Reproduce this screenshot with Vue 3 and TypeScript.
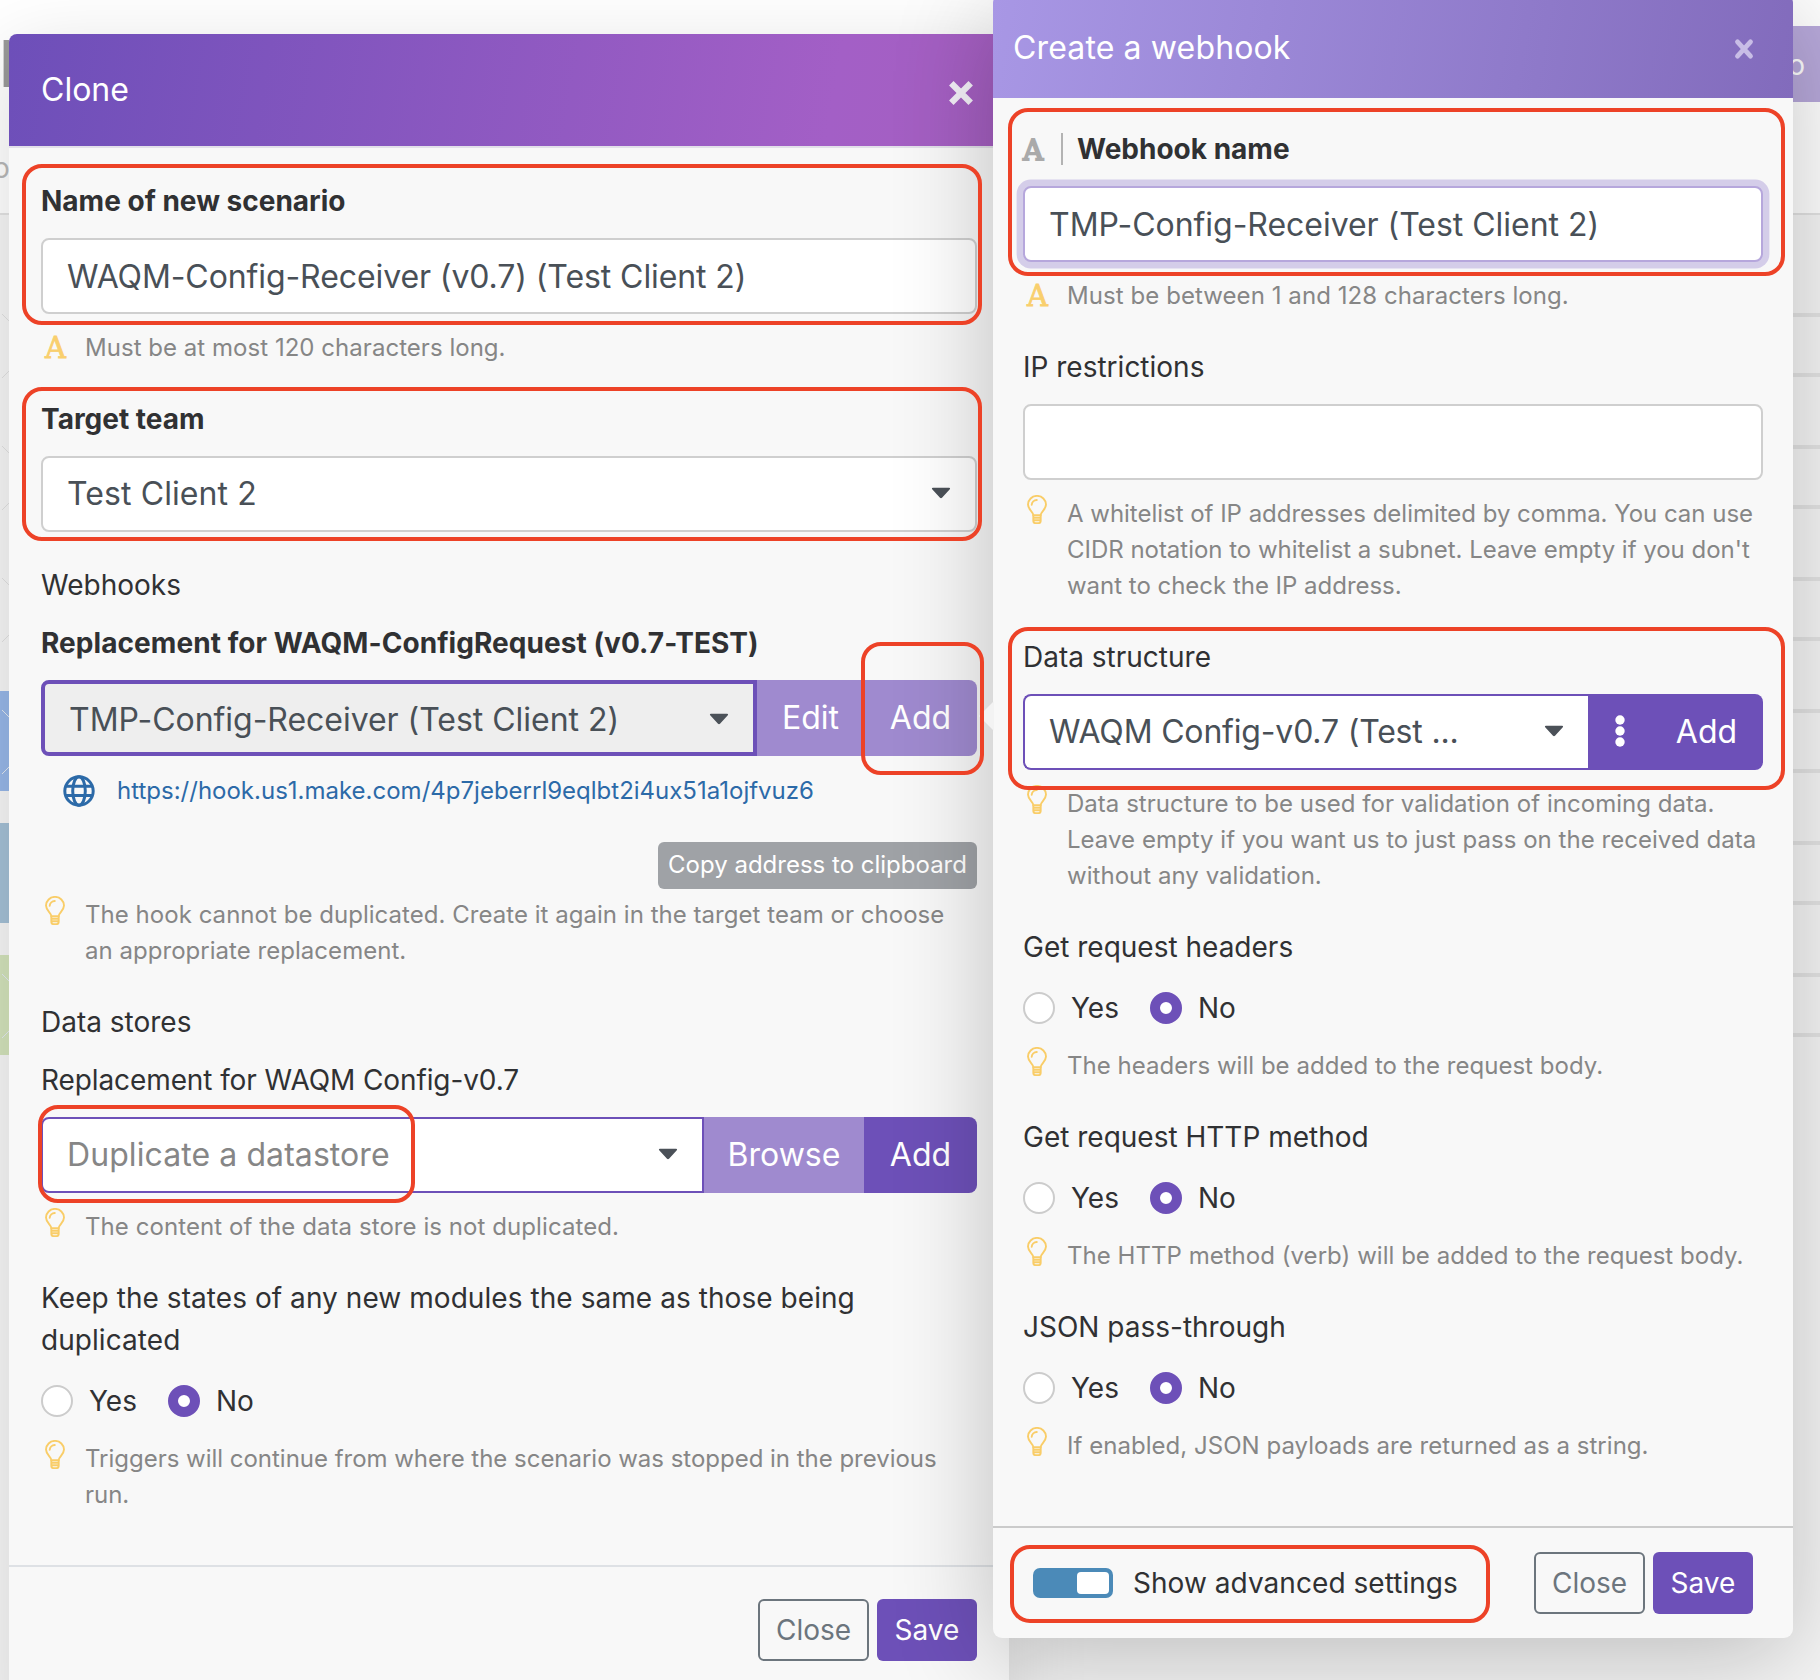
<script setup lang="ts">
import { h, type FunctionalComponent } from 'vue'

/** Light bulb shown in front of a hint. */
const Bulb: FunctionalComponent = () =>
  h('svg', { viewBox: '0 0 20 29', width: 20, height: 29, fill: 'none', stroke: '#f9cd68', 'stroke-width': 1.9, 'stroke-linejoin': 'round', 'stroke-linecap': 'round' }, [
    h('path', { d: 'M6.3 20.2C6.3 16.6 1 14.6 1 9.6a9 8.7 0 0 1 18 0c0 5-5.300 7-5.300 10.600z' }),
    h('path', { d: 'M4.700 9.800A5.300 5.200 0 0 1 9.800 5' }),
    h('path', { d: 'M6.300 20.200v5.300c0 1.500 1 2.600 2.200 2.600h3c1.200 0 2.200-1.100 2.200-2.600v-5.300M6.500 22.800h7M6.500 25.300h7' }),
  ])

/** Small downward arrow of a select box. */
const Caret: FunctionalComponent = () =>
  h('svg', { viewBox: '0 0 20 12', width: 20, height: 12 }, [
    h('path', { d: 'M1.800.8h16.400c.8 0 1.200.9.600 1.500l-7.800 8.500c-.6.6-1.400.6-2 0L1.200 2.300C.6 1.700 1 .8 1.800.8z', fill: '#4b5158' }),
  ])

interface YesNoField { label: string; hint: string }
const yesNoFields: YesNoField[] = [
  { label: 'Get request headers', hint: 'The headers will be added to the request body.' },
  { label: 'Get request HTTP method', hint: 'The HTTP method (verb) will be added to the request body.' },
  { label: 'JSON pass-through', hint: 'If enabled, JSON payloads are returned as a string.' },
]

interface Box { x: number; y: number; w: number; h: number }
const highlights: Box[] = [
  { x: 22, y: 164, w: 960, h: 161 },
  { x: 22, y: 387, w: 960, h: 154 },
  { x: 861, y: 642, w: 123, h: 133 },
  { x: 38, y: 1105, w: 377, h: 98 },
  { x: 1008, y: 108, w: 777, h: 168 },
  { x: 1008, y: 627, w: 777, h: 163 },
  { x: 1010, y: 1545, w: 480, h: 78 },
]
const place = (b: Box) => ({ left: b.x + 'px', top: b.y + 'px', width: b.w + 'px', height: b.h + 'px' })

const rowLines = [313, 373, 445, 505, 577, 637, 709, 769, 841, 901, 973, 1033]
const modules = [
  { y: 691, color: '#97b7e8', cross: true },
  { y: 823, color: '#a4c0d6', cross: false },
  { y: 955, color: '#d3e3bb', cross: true },
]
const chevrons = [314, 446, 578]
</script>

<template>
  <div class="screen">
    <div class="page">
      <span class="page-title">H</span>
      <span class="page-tab">o</span>
      <div class="page-rule"></div>
      <div class="page-body"></div>
      <div class="page-button">o</div>
      <i v-for="y in rowLines" :key="y" class="row-line" :style="{ top: y - 0.5 + 'px' }"></i>
      <svg v-for="y in chevrons" :key="y" class="chevron" :style="{ top: y + 'px' }" width="9" height="64" viewBox="0 0 9 64"><path d="M2 0l7 7M2 64l7-7" stroke="#e0e0e0" fill="none" /></svg>
      <div v-for="m in modules" :key="m.y" class="module" :style="{ top: m.y + 'px', background: m.color }">
        <svg v-if="m.cross" width="9" height="64" viewBox="0 0 9 64"><path d="M2 0l7 7M2 64l7-7" stroke="#e3e9f0" fill="none" /></svg>
      </div>
    </div>

    <section class="modal clone">
      <header>
        <h2>Clone</h2>
        <svg width="26" height="26" viewBox="0 0 26 26"><path d="M3.300 3.300l19.400 19.400M22.700 3.300L3.300 22.700" stroke="#f4f0f8" stroke-width="6.300" /></svg>
      </header>
      <div class="body">
        <label class="strong">Name of new scenario</label>
        <div class="input long">WAQM-Config-Receiver (v0.7) (Test Client 2)</div>
        <p class="hint"><b class="serif">A</b><span>Must be at most 120 characters long.</span></p>

        <label class="strong next">Target team</label>
        <div class="input select"><span>Test Client 2</span><Caret /></div>

        <label class="section">Webhooks</label>
        <label class="strong sub spread">Replacement for WAQM-ConfigRequest (v0.7-TEST)</label>
        <div class="group">
          <div class="input thick"><span>TMP-Config-Receiver (Test Client 2)</span><Caret /></div>
          <button class="light edit">Edit</button>
          <button class="light add">Add</button>
        </div>
        <div class="url">
          <svg width="32" height="32" viewBox="0 0 32 32" fill="none" stroke="#2c6aa8" stroke-width="3"><circle cx="16" cy="16" r="14.200" /><ellipse cx="16" cy="16" rx="6.300" ry="14.200" /><path d="M3 11.200h26M3 20.500h26" /></svg>
          <a>https://hook.us1.make.com/4p7jeberrl9eqlbt2i4ux51a1ojfvuz6</a>
        </div>
        <div class="copy-row"><button class="copy">Copy address to clipboard</button></div>
        <p class="hint tight"><Bulb /><span>The hook cannot be duplicated. Create it again in the target team or choose<br>an appropriate replacement.</span></p>

        <label class="next">Data stores</label>
        <label class="sub squeezed">Replacement for WAQM Config-v0.7</label>
        <div class="group">
          <div class="input joined"><span class="muted">Duplicate a datastore</span><Caret /></div>
          <button class="light browse">Browse</button>
          <button class="dark add">Add</button>
        </div>
        <p class="hint wide"><Bulb /><span>The content of the data store is not duplicated.</span></p>

        <label class="next spread">Keep the states of any new modules the same as those being<br>duplicated</label>
        <div class="radios"><i></i><span>Yes</span><i class="on"></i><span>No</span></div>
        <p class="hint after-radio"><Bulb /><span class="even">Triggers will continue from where the scenario was stopped in the previous<br>run.</span></p>
      </div>
      <footer><button class="outline">Close</button><button class="save">Save</button></footer>
    </section>

    <section class="modal webhook">
      <header>
        <h2>Create a webhook</h2>
        <svg width="20" height="22" viewBox="0 0 20 22"><path d="M3.500 3.800l13 14.400M16.500 3.800l-13 14.400" stroke="#c8bde6" stroke-width="4.800" stroke-linecap="round" /></svg>
      </header>
      <div class="body">
        <label class="strong typed"><b class="serif grey">A</b><i></i><span>Webhook name</span></label>
        <div class="input focus">TMP-Config-Receiver (Test Client 2)</div>
        <p class="hint wide"><b class="serif">A</b><span>Must be between 1 and 128 characters long.</span></p>

        <label class="next">IP restrictions</label>
        <div class="input"></div>
        <p class="hint"><Bulb /><span class="even">A whitelist of IP addresses delimited by comma. You can use<br>CIDR notation to whitelist a subnet. Leave empty if you don't<br>want to check the IP address.</span></p>

        <label class="next">Data structure</label>
        <div class="group">
          <div class="input joined"><span class="narrow">WAQM Config-v0.7 (Test ...</span><Caret /></div>
          <button class="dark dots"><svg width="10" height="32" viewBox="0 0 10 32" fill="#fff"><circle cx="5" cy="5" r="4.700" /><circle cx="5" cy="16" r="4.700" /><circle cx="5" cy="27" r="4.700" /></svg></button>
          <button class="dark add">Add</button>
        </div>
        <p class="hint"><Bulb /><span>Data structure to be used for validation of incoming data.<br>Leave empty if you want us to just pass on the received data<br>without any validation.</span></p>

        <template v-for="f in yesNoFields" :key="f.label">
          <label class="next">{{ f.label }}</label>
          <div class="radios"><i></i><span>Yes</span><i class="on"></i><span>No</span></div>
          <p class="hint after-radio"><Bulb /><span>{{ f.hint }}</span></p>
        </template>
      </div>
      <footer>
        <div class="toggle"><i></i></div><span>Show advanced settings</span>
        <button class="outline">Close</button><button class="save">Save</button>
      </footer>
      <svg class="pointer" width="15" height="30" viewBox="0 0 15 30"><path d="M15 0L0 15l15 15z" fill="#f3f3f3" /></svg>
    </section>

    <div v-for="(b, n) in highlights" :key="n" class="highlight" :style="place(b)"></div>
  </div>
</template>

<style>
body { margin: 0; }
</style>

<style scoped>
* { box-sizing: border-box; }
.screen { position: relative; width: 1820px; height: 1680px; overflow: hidden; background: #fff; font-family: Inter, "Liberation Sans", sans-serif; color: #303133; letter-spacing: 0; }
h2, p, label { margin: 0; font-weight: 400; }
button { font: inherit; border: 0; padding: 0; margin: 0; letter-spacing: inherit; }

.page { position: absolute; inset: 0; }
.page > * { position: absolute; }
.page-title { left: -2px; top: 26px; font-size: 64px; line-height: 76px; color: #999; }
.page-tab { left: -7px; top: 151px; font-size: 28px; line-height: 34px; color: #b8b8b8; }
.page-rule { left: 0; right: 0; top: 213px; height: 2px; background: #e3e3e3; }
.page-body { left: 0; right: 0; top: 215px; bottom: 0; background: #f6f6f6; }
.page-button { right: 0; top: 26px; width: 60px; height: 76px; background: #b8a9db; color: #fff; font-size: 28px; line-height: 78px; text-align: right; padding-right: 15px; }
.row-line { right: 0; width: 60px; height: 4px; background: #e4e4e4; }
.module { left: 0; width: 20px; height: 100px; z-index: 0; }
.module svg { position: absolute; top: 19px; left: 0; }

.modal { position: absolute; background: #f8f8f8; }
.modal header { display: flex; align-items: center; justify-content: space-between; color: #fff; }
h2 { font-size: 32px; line-height: 48px; }
.body label { display: block; font-size: 28px; line-height: 42px; margin-bottom: 16px; }
.body label.strong { font-weight: 700; }
.body label.next { margin-top: 32px; }
.body label.section { margin-top: 32px; }
.squeezed { letter-spacing: -.1px; }
.even { letter-spacing: -.02px; }
.spread { letter-spacing: .06px; }
.narrow { letter-spacing: -.18px; }
.clone { left: 9px; top: 34px; width: 1000px; height: 1700px; border-radius: 8px; box-shadow: 0 20px 80px rgba(0, 0, 0, .15); }
.clone header { height: 112px; padding: 0 35px 0 32px; border-radius: 8px 8px 0 0; background: linear-gradient(100deg, #6d4fb9 0%, #a35fc6 82%, #a55fc0 100%); }
.clone header svg { margin-top: 6px; }
.clone .body { height: 1419px; padding: 32px 32px 0; border-top: 2px solid #e2e0e9; }
.clone footer { display: flex; justify-content: flex-end; gap: 8px; padding: 32px 32px 0; border-top: 2px solid #dee1e5; }

.webhook { left: 993px; top: -6px; width: 800px; height: 1644px; border-radius: 9px; box-shadow: 0 20px 100px rgba(0, 0, 0, .24); }
.webhook header { height: 104px; padding: 4px 39px 0 20px; border-radius: 9px 9px 0 0; background: linear-gradient(100deg, #a897e5, #826bbc); }
.webhook header svg { margin-top: 1px; }
.webhook h2 { letter-spacing: .14px; }
.webhook .body { height: 1428px; padding: 30px 30px 0; }
.webhook footer { display: flex; align-items: center; height: 114px; padding: 0 40px; padding-bottom: 2px; border-top: 2px solid #cbcbcb; font-size: 28px; }
.webhook footer > span { margin: 0 auto 0 20px; letter-spacing: .05px; }
.webhook footer .save { margin-left: 8px; }
.pointer { position: absolute; left: -14px; top: 707px; }

.input { display: flex; align-items: center; justify-content: space-between; height: 76px; padding: 0 24px; border: 2px solid #cfcfcf; border-radius: 8px; background: #fff; font-size: 32px; color: #495057; white-space: nowrap; }
.input.long { letter-spacing: -.09px; }
.input.select { padding-bottom: 2px; letter-spacing: .1px; }
.muted { color: #868686; letter-spacing: .08px; }
.group { display: flex; }
.group .input { flex: 1; border-radius: 8px 0 0 8px; border-color: #6d50b8; }
.group .thick { border-width: 4px; background: #eee; padding: 2px 24px 0 24px; letter-spacing: -.03px; }
.group .joined { padding-right: 24px; padding-bottom: 2px; }
.webhook .joined { border-right: 0; }
.group button { height: 76px; padding-bottom: 2px; font-size: 32px; color: #fff; }
.light { background: #9f8acf; }
.dark { background: #6d50b8; }
.edit { width: 107px; }
.browse { width: 160px; }
.add { width: 113px; border-radius: 0 8px 8px 0; }
.group .dots { width: 62px; display: flex; align-items: center; justify-content: center; padding: 0 0 2px 1px; }
.input.focus { border-color: #b6a7dc; box-shadow: 0 0 0 6.400px #d4cde9; letter-spacing: -.03px; }

.hint { display: flex; margin-top: 16px; padding-left: 4px; font-size: 24px; line-height: 36px; color: #868686; white-space: nowrap; letter-spacing: .035px; }
.hint.wide { letter-spacing: .07px; }
.hint svg { flex: none; width: 20px; margin: -1px 20px 0 0; }
.hint.tight { margin-top: 8px; }
.hint.after-radio { margin-top: 24px; }
.serif { flex: none; width: 22px; margin-right: 18px; font-family: "DejaVu Serif", serif; font-size: 29px; font-weight: 400; color: #f9cf6d; -webkit-text-stroke: .8px #f9cf6d; }
.body label.typed { display: flex; align-items: center; height: 42px; }
.typed .serif { width: 21px; margin: 4px 0 0; }
.typed i { width: 2px; height: 32px; margin: 0 14px 0 17px; background: #b3b3b3; }
.serif.grey { color: #aaa; -webkit-text-stroke: 1.8px #aaa; font-size: 28px; }

.url { display: flex; align-items: center; height: 36px; margin-top: 16px; padding-left: 22px; font-size: 24px; color: #2c6aa8; }
.url svg { margin-top: 1px; }
.url a { margin-left: 22px; }
.copy-row { display: flex; justify-content: flex-end; margin-top: 34px; }
.copy { width: 319px; height: 47px; padding-bottom: 2px; border-radius: 6px; background: #9fa2a6; color: #fff; font-size: 24px; }

.radios { display: flex; align-items: center; height: 32px; margin-top: 24px; font-size: 28px; }
.radios i { width: 32px; height: 32px; border: 2px solid #ccc; border-radius: 50%; background: #fff; margin-right: 16px; }
.radios i.on { border: 10px solid #6d50b8; margin-left: 31px; }

.outline, .save { height: 62px; border-radius: 6px; font-size: 28px; }
.outline { width: 111px; border: 2px solid #6c757d; background: transparent; color: #6c757d; }
.save { width: 100px; background: #6d50b8; color: #fff; }
.toggle { width: 80px; height: 30px; border-radius: 7px; background: #4b8ab8; padding: 4px; }
.toggle i { display: block; width: 32px; height: 22px; margin-left: auto; border-radius: 4px; background: #fff; }

.highlight { position: absolute; border: 4px solid #ed4227; border-radius: 20px; }
</style>
